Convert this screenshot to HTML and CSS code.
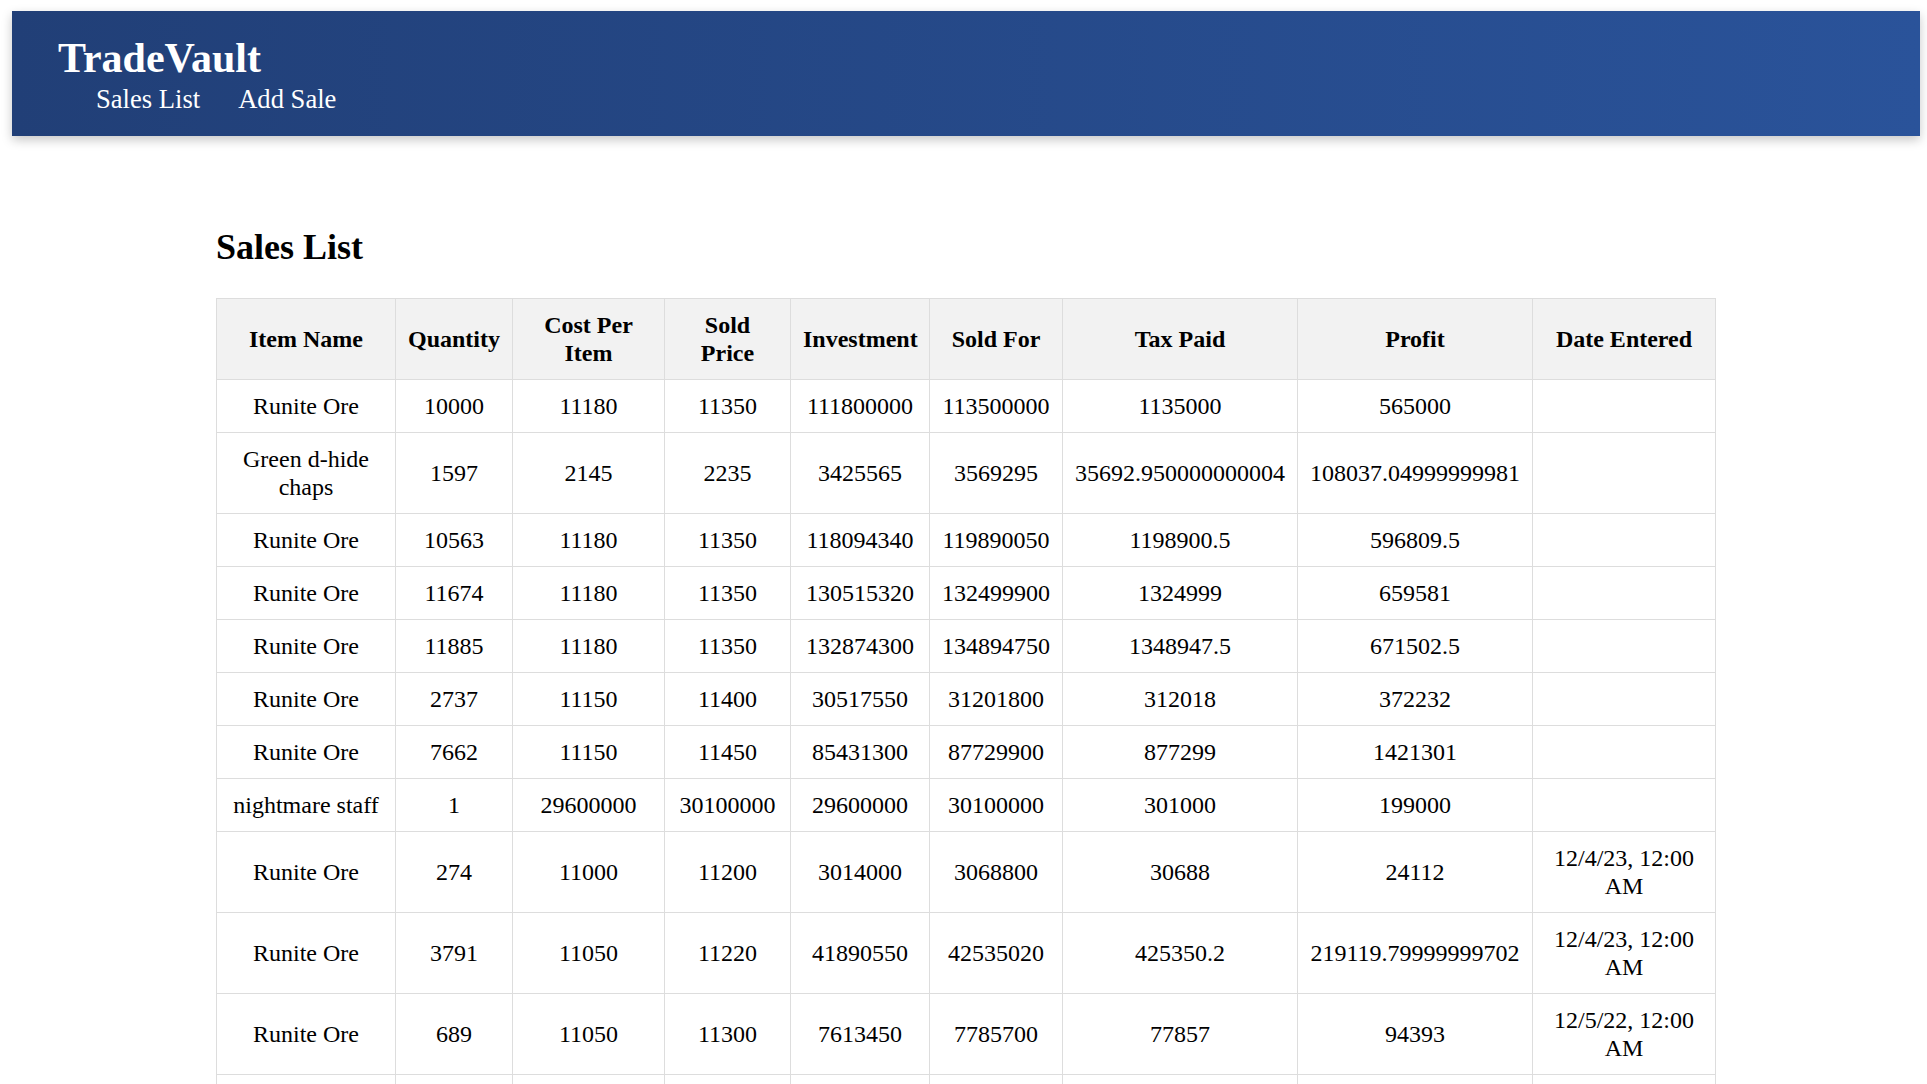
FILE: index.html
```html
<!DOCTYPE html>
<html lang="en">
<head>
<meta charset="utf-8">
<title>TradeVault</title>
<link rel="stylesheet" href="styles.css">
</head>
<body>
<div class="page">
  <header class="site-header">
    <h1 class="brand">TradeVault</h1>
    <nav class="nav">
      <a href="#" class="nav-link">Sales List</a>
      <a href="#" class="nav-link">Add Sale</a>
    </nav>
  </header>
  <main class="content">
    <h2 class="page-title">Sales List</h2>
    <table class="sales">
      <colgroup>
        <col class="c-name">
        <col class="c-qty">
        <col class="c-cost">
        <col class="c-sold">
        <col class="c-inv">
        <col class="c-for">
        <col class="c-tax">
        <col class="c-profit">
        <col class="c-date">
      </colgroup>
      <thead>
        <tr>
          <th>Item Name</th><th>Quantity</th><th>Cost Per Item</th><th>Sold Price</th><th>Investment</th><th>Sold For</th><th>Tax Paid</th><th>Profit</th><th>Date Entered</th>
        </tr>
      </thead>
      <tbody>
        <tr><td>Runite Ore</td><td>10000</td><td>11180</td><td>11350</td><td>111800000</td><td>113500000</td><td>1135000</td><td>565000</td><td></td></tr>
        <tr><td>Green d-hide chaps</td><td>1597</td><td>2145</td><td>2235</td><td>3425565</td><td>3569295</td><td>35692.950000000004</td><td>108037.04999999981</td><td></td></tr>
        <tr><td>Runite Ore</td><td>10563</td><td>11180</td><td>11350</td><td>118094340</td><td>119890050</td><td>1198900.5</td><td>596809.5</td><td></td></tr>
        <tr><td>Runite Ore</td><td>11674</td><td>11180</td><td>11350</td><td>130515320</td><td>132499900</td><td>1324999</td><td>659581</td><td></td></tr>
        <tr><td>Runite Ore</td><td>11885</td><td>11180</td><td>11350</td><td>132874300</td><td>134894750</td><td>1348947.5</td><td>671502.5</td><td></td></tr>
        <tr><td>Runite Ore</td><td>2737</td><td>11150</td><td>11400</td><td>30517550</td><td>31201800</td><td>312018</td><td>372232</td><td></td></tr>
        <tr><td>Runite Ore</td><td>7662</td><td>11150</td><td>11450</td><td>85431300</td><td>87729900</td><td>877299</td><td>1421301</td><td></td></tr>
        <tr><td>nightmare staff</td><td>1</td><td>29600000</td><td>30100000</td><td>29600000</td><td>30100000</td><td>301000</td><td>199000</td><td></td></tr>
        <tr><td>Runite Ore</td><td>274</td><td>11000</td><td>11200</td><td>3014000</td><td>3068800</td><td>30688</td><td>24112</td><td>12/4/23, 12:00 AM</td></tr>
        <tr><td>Runite Ore</td><td>3791</td><td>11050</td><td>11220</td><td>41890550</td><td>42535020</td><td>425350.2</td><td>219119.79999999702</td><td>12/4/23, 12:00 AM</td></tr>
        <tr><td>Runite Ore</td><td>689</td><td>11050</td><td>11300</td><td>7613450</td><td>7785700</td><td>77857</td><td>94393</td><td>12/5/22, 12:00 AM</td></tr>
        <tr><td>Runite Ore</td><td>1200</td><td>11050</td><td>11300</td><td>13260000</td><td>13560000</td><td>135600</td><td>164400</td><td>12/5/22, 12:00 AM</td></tr>
      </tbody>
    </table>
  </main>
</div>
</body>
</html>
```

FILE: styles.css
```css
html {
  scrollbar-width: none;
}
html::-webkit-scrollbar {
  display: none;
}
body {
  margin: 0;
  font-family: "Liberation Serif", "Times New Roman", serif;
  font-size: 24px;
  color: #000;
  background: #fff;
}
.page {
  padding: 11px 7px 0 12px;
}
.site-header {
  height: 125px;
  box-sizing: border-box;
  padding: 24px 46px 0;
  background: linear-gradient(90deg, #213f77 0%, #2a539a 100%);
  color: #fff;
  box-shadow: 0 4px 10px rgba(0, 0, 0, 0.22);
}
.brand {
  margin: 0;
  font-size: 42px;
  font-weight: bold;
  line-height: 46px;
}
.nav {
  display: flex;
  gap: 38px;
  padding-left: 38px;
  margin-top: 3px;
}
.nav-link {
  color: #fff;
  text-decoration: none;
  font-size: 26.6px;
  line-height: 31px;
}
.content {
  max-width: 1500px;
  margin: 0 auto;
  padding-top: 90px;
}
.page-title {
  margin: 0 0 30px;
  font-size: 36px;
  font-weight: bold;
}
.sales {
  width: 1499px;
  table-layout: fixed;
  border-collapse: collapse;
  line-height: 28px;
}
.c-name { width: 179px; }
.c-qty { width: 117px; }
.c-cost { width: 152px; }
.c-sold { width: 126px; }
.c-inv { width: 139px; }
.c-for { width: 133px; }
.c-tax { width: 235px; }
.c-profit { width: 235px; }
.c-date { width: 183px; }
.sales th,
.sales td {
  border: 1px solid #ddd;
  padding: 12px;
  text-align: center;
}
.sales th {
  background: #f2f2f2;
  font-weight: bold;
}
```
